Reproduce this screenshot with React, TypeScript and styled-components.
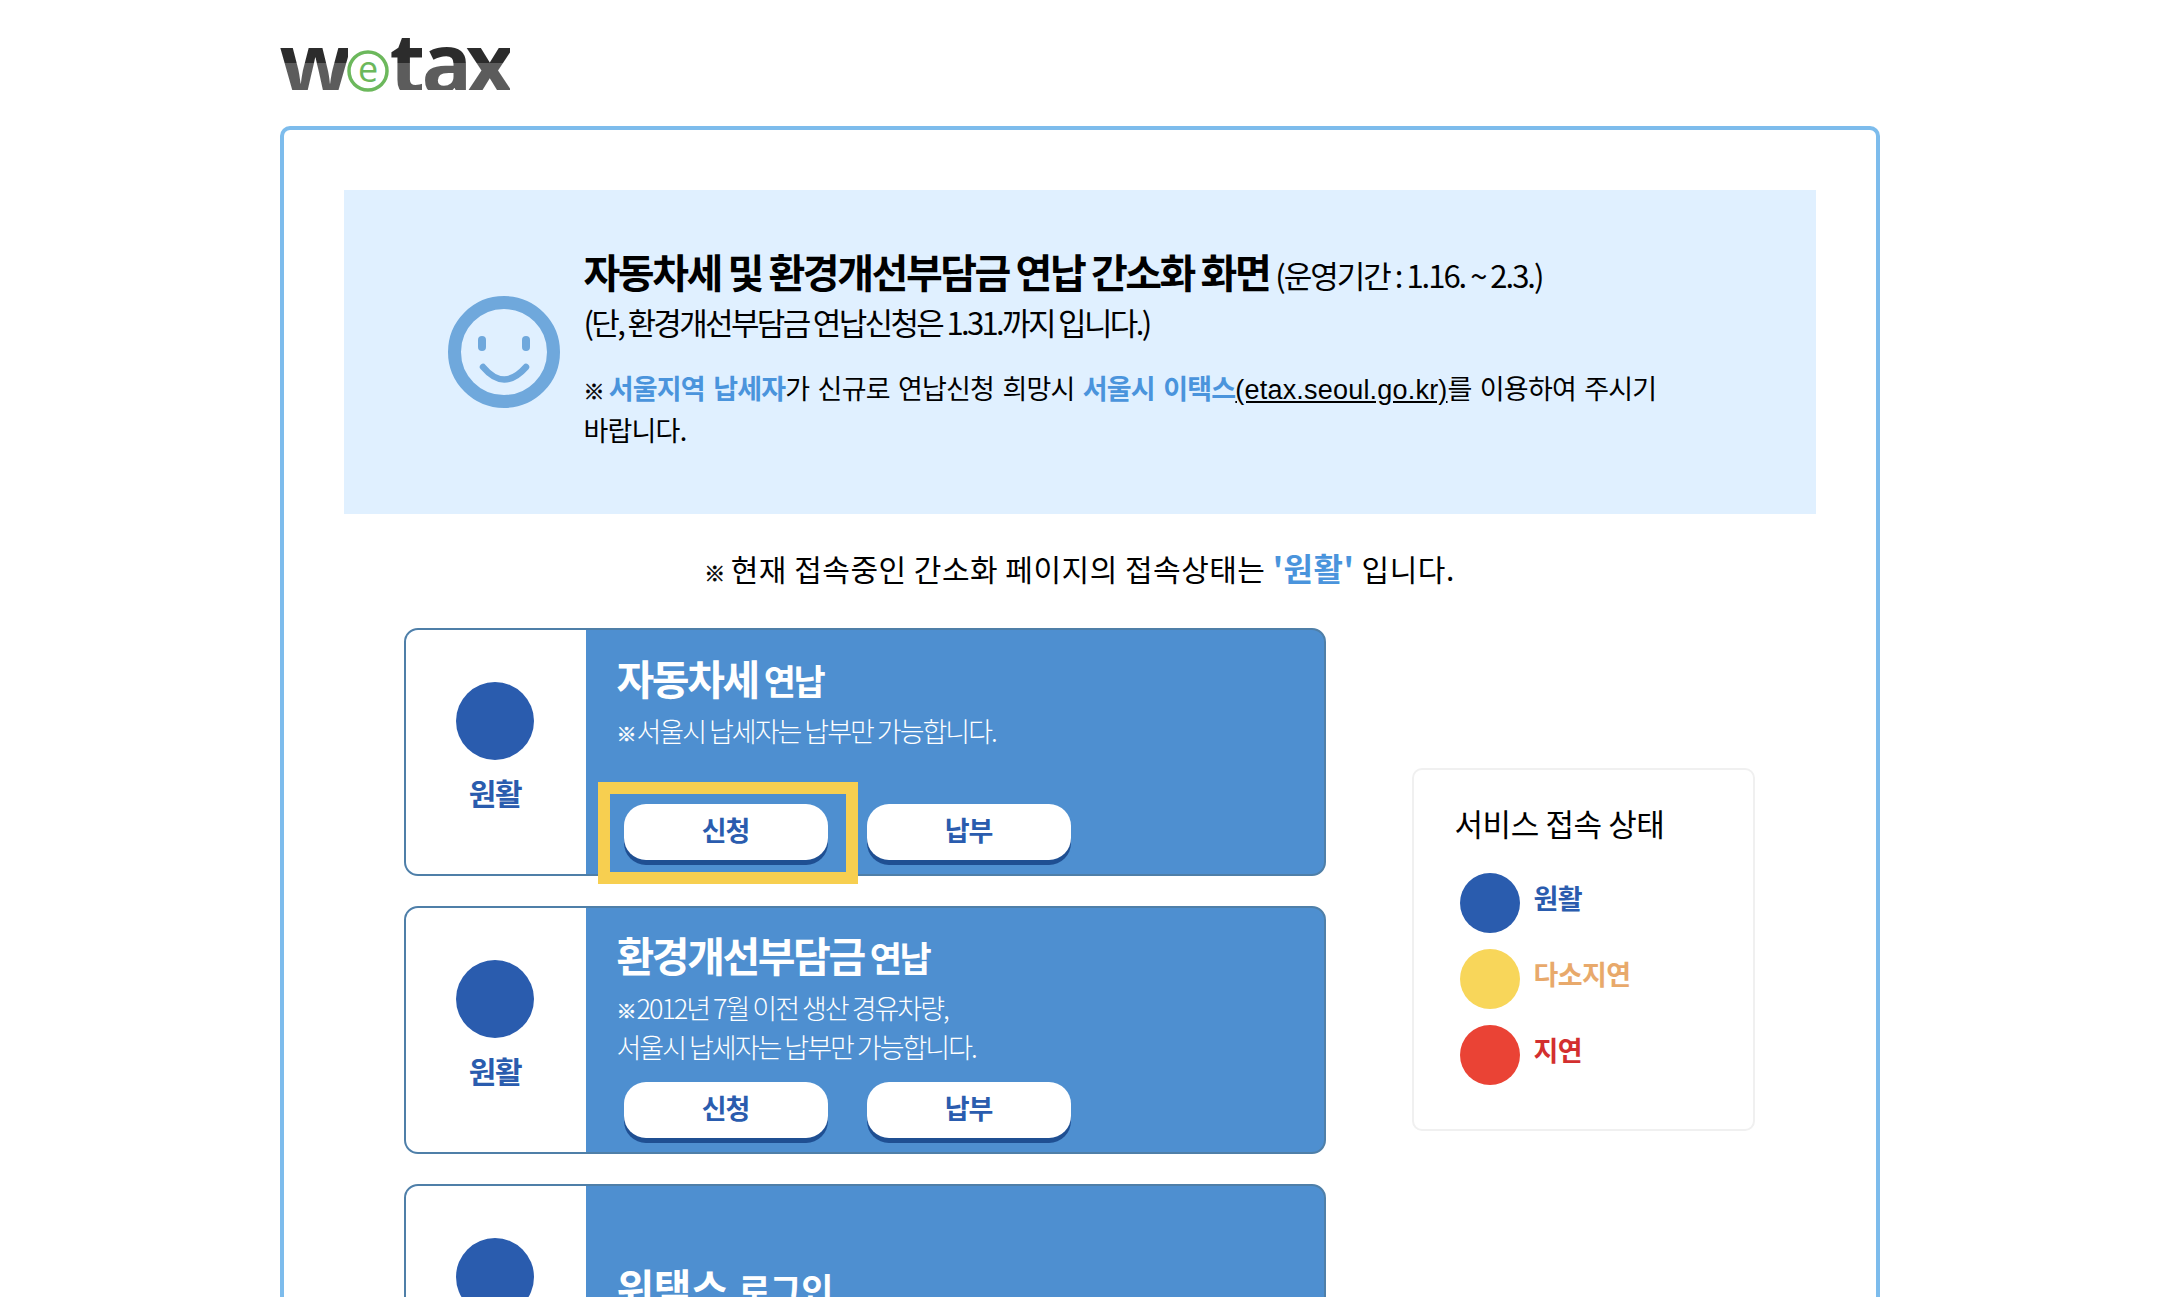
import React from "react";
import styled, { createGlobalStyle } from "styled-components";

const Global = createGlobalStyle`
  html, body { margin: 0; padding: 0; height: 100%; overflow: hidden; background: #fff; }
  body { font-family: "Noto Sans CJK KR", "Liberation Sans", sans-serif; color: #000; }
  * { box-sizing: border-box; }
`;

const Page = styled.div`
  width: 1600px;
  margin: 0 auto;
  height: 1297px;
  overflow: hidden;
`;
const Header = styled.header`
  height: 126px;
  padding-top: 36px;
`;
const Logo = styled.div`
  display: flex;
  align-items: flex-end;
  height: 57px;
  overflow: hidden;
`;
const LogoLetter = styled.span<{ $w: number }>`
  display: block;
  width: ${(p) => p.$w}px;
  font-family: "Open Sans", "Liberation Sans", sans-serif;
  font-weight: 700;
  font-size: 84px;
  line-height: 56px;
  height: 56px;
  text-align: center;
  background: linear-gradient(#2c2c2c 0 52%, #5c5c5c 52% 100%);
  -webkit-background-clip: text;
  background-clip: text;
  color: transparent;
  transform: translateY(-3px);
`;
const LogoMark = styled.svg`
  display: block;
  flex: none;
  margin: 0 0 0 -2px;
`;
const Frame = styled.main`
  border: 4px solid #7dbcec;
  border-bottom: 0;
  border-radius: 10px 10px 0 0;
  padding: 60px 60px 0;
`;
const Banner = styled.section`
  height: 324px;
  background: #e0f0ff;
  display: flex;
  align-items: flex-start;
  padding: 58px 0 0 104px;
  gap: 24px;
`;
const Smile = styled.svg`
  flex: none;
  margin-top: 48px;
`;
const BannerBody = styled.div`
  width: 1090px;
`;
const BannerTitle = styled.h1`
  margin: 0;
  font-size: 40px;
  line-height: 46px;
  font-weight: 700;
  letter-spacing: -2.45px;
  white-space: nowrap;
`;
const Period = styled.span`
  font-size: 31px;
  font-weight: 400;
  letter-spacing: -2px;
  margin-left: 6px;
`;
const BannerSub = styled.p`
  margin: 1px 0 0;
  font-size: 31px;
  line-height: 46px;
  letter-spacing: -2.65px;
  white-space: nowrap;
`;
const BannerNote = styled.p`
  margin: 23px 0 0;
  font-size: 27px;
  line-height: 40px;
  letter-spacing: -0.8px;
  word-spacing: 3px;
  word-break: keep-all;
`;
const RefMark = styled.span`
  font-size: 21px;
  font-weight: 700;
  margin-right: 5px;
  -webkit-text-stroke: 0.5px currentColor;
`;
const Accent = styled.b`
  color: #4a94dc;
  font-weight: 700;
`;
const Site = styled.span`
  font-family: "Liberation Sans", sans-serif;
  letter-spacing: 0.2px;
  text-decoration: underline;
`;
const Status = styled.p`
  margin: 33px 0 0;
  height: 46px;
  text-align: center;
  font-size: 30px;
  line-height: 40px;
  letter-spacing: 0.5px;
`;
const StatusValue = styled.b`
  color: #4a94dc;
  font-size: 32px;
  font-weight: 700;
`;
const Columns = styled.div`
  display: flex;
  align-items: flex-start;
  justify-content: space-between;
  padding: 35px 61px 0 60px;
`;
const CardList = styled.div`
  width: 922px;
  display: flex;
  flex-direction: column;
  gap: 30px;
  flex: none;
`;
const Card = styled.article`
  display: flex;
  height: 248px;
  flex: none;
  border-radius: 14px;
  border: 2px solid #4f7fa8;
  overflow: hidden;
  background: #4e8fd0;
`;
const StatePanel = styled.div`
  width: 180px;
  flex: none;
  background: #fff;
  display: flex;
  flex-direction: column;
  align-items: center;
  padding: 52px 1px 0 0;
`;
const StateDot = styled.span<{ $c: string; $s: number }>`
  display: block;
  flex: none;
  width: ${(p) => p.$s}px;
  height: ${(p) => p.$s}px;
  border-radius: 50%;
  background: ${(p) => p.$c};
`;
const StateLabel = styled.span`
  margin-top: 10px;
  font-size: 30px;
  line-height: 44px;
  font-weight: 700;
  letter-spacing: -1.4px;
  color: #2a5cae;
`;
const CardBody = styled.div<{ $top: number }>`
  flex: 1;
  padding: ${(p) => p.$top}px 0 0 31px;
  color: #fff;
`;
const CardTitle = styled.h2<{ $open?: boolean }>`
  margin: 0;
  font-size: 41px;
  line-height: 56px;
  font-weight: 700;
  letter-spacing: ${(p) => (p.$open ? "-0.5px" : "-2.4px")};
  white-space: nowrap;
`;
const CardTitleTail = styled.span`
  font-size: 35px;
  letter-spacing: -2.4px;
  margin-left: 6px;
`;
const CardTitleTailOpen = styled(CardTitleTail)`
  letter-spacing: -0.6px;
  margin-left: 10px;
`;
const CardNote = styled.p`
  margin: 5px 0 0;
  font-size: 27px;
  line-height: 36px;
  font-weight: 300;
  letter-spacing: -2px;
  white-space: nowrap;
`;
const CardMark = styled.span`
  font-size: 20px;
  font-weight: 700;
  letter-spacing: 0;
  -webkit-text-stroke: 0.5px currentColor;
`;
const Buttons = styled.div<{ $top: number }>`
  display: flex;
  gap: 39px;
  margin: ${(p) => p.$top}px 0 0 7px;
`;
const ActionButton = styled.button`
  width: 204px;
  height: 56px;
  padding: 0 0 6px;
  border: 0;
  border-radius: 22px;
  background: #fff;
  box-shadow: 0 5px 0 #1f4f92;
  font-family: inherit;
  font-size: 27px;
  font-weight: 700;
  letter-spacing: -1.2px;
  color: #2a5cae;
`;
const Highlight = styled.span`
  position: absolute;
  left: 194px;
  top: 154px;
  width: 260px;
  height: 102px;
  border: 12px solid #f7cf50;
  pointer-events: none;
`;
const CardFrame = styled.div`
  position: relative;
`;
const LegendBox = styled.aside`
  width: 343px;
  height: 363px;
  margin-top: 140px;
  flex: none;
  border: 2px solid #f0f0f0;
  border-radius: 10px;
  padding: 30px 0 0 41px;
`;
const LegendTitle = styled.h3`
  margin: 0 0 27px;
  font-size: 31px;
  line-height: 46px;
  font-weight: 400;
  letter-spacing: -0.4px;
  white-space: nowrap;
`;
const LegendRows = styled.ul`
  list-style: none;
  margin: 0;
  padding: 0 0 0 5px;
  display: flex;
  flex-direction: column;
  gap: 16px;
`;
const LegendRow = styled.li`
  display: flex;
  align-items: center;
  gap: 14px;
`;
const LegendLabel = styled.span<{ $c: string }>`
  color: ${(p) => p.$c};
  font-size: 27px;
  font-weight: 700;
  line-height: 40px;
  letter-spacing: -0.6px;
  margin-top: -10px;
`;

const BLUE = "#2a5cae";

function StateCell() {
  return (
    <StatePanel>
      <StateDot $c={BLUE} $s={78} />
      <StateLabel>원활</StateLabel>
    </StatePanel>
  );
}

export default function App() {
  return (
    <Page>
      <Global />
      <Header>
        <Logo aria-label="wetax">
          <LogoLetter $w={68}>w</LogoLetter>
          <LogoMark width="44" height="46" viewBox="0 0 44 46">
            <circle cx="22" cy="24" r="19" fill="none" stroke="#6cb85c" strokeWidth="3.5" />
            <text x="22" y="35" textAnchor="middle" fontFamily="Open Sans, sans-serif" fontSize="36" fontWeight="400" fill="#6cb85c">e</text>
          </LogoMark>
          <LogoLetter $w={32}>t</LogoLetter>
          <LogoLetter $w={44}>a</LogoLetter>
          <LogoLetter $w={44}>x</LogoLetter>
        </Logo>
      </Header>
      <Frame>
        <Banner>
          <Smile width="112" height="112" viewBox="0 0 112 112">
            <circle cx="56" cy="56" r="49.5" fill="none" stroke="#6fa8dc" strokeWidth="13" />
            <rect x="30" y="40" width="8" height="15" rx="4" fill="#6fa8dc" />
            <rect x="74" y="40" width="8" height="15" rx="4" fill="#6fa8dc" />
            <path d="M35 71 Q56 96 78 71" fill="none" stroke="#6fa8dc" strokeWidth="6.5" strokeLinecap="round" />
          </Smile>
          <BannerBody>
            <BannerTitle>
              자동차세 및 환경개선부담금 연납 간소화 화면<Period>(운영기간 : 1.16. ~ 2.3.)</Period>
            </BannerTitle>
            <BannerSub>(단, 환경개선부담금 연납신청은 1.31.까지 입니다.)</BannerSub>
            <BannerNote>
              <RefMark>※</RefMark><Accent>서울지역 납세자</Accent>가 신규로 연납신청 희망시 <Accent>서울시 이택스</Accent>
              <Site>(etax.seoul.go.kr)</Site>를 이용하여 주시기 바랍니다.
            </BannerNote>
          </BannerBody>
        </Banner>
        <Status>
          <RefMark>※</RefMark>현재 접속중인 간소화 페이지의 접속상태는 <StatusValue>'원활'</StatusValue> 입니다.
        </Status>
        <Columns>
          <CardList>
            <CardFrame>
              <Card>
                <StateCell />
                <CardBody $top={19}>
                  <CardTitle>자동차세<CardTitleTail>연납</CardTitleTail></CardTitle>
                  <CardNote><CardMark>※</CardMark>서울시 납세자는 납부만 가능합니다.</CardNote>
                  <Buttons $top={52}>
                    <ActionButton>신청</ActionButton>
                    <ActionButton>납부</ActionButton>
                  </Buttons>
                </CardBody>
              </Card>
              <Highlight />
            </CardFrame>
            <Card>
              <StateCell />
              <CardBody $top={18}>
                <CardTitle>환경개선부담금<CardTitleTail>연납</CardTitleTail></CardTitle>
                <CardNote><CardMark>※</CardMark>2012년 7월 이전 생산 경유차량,<br />서울시 납세자는 납부만 가능합니다.</CardNote>
                <Buttons $top={17}>
                  <ActionButton>신청</ActionButton>
                  <ActionButton>납부</ActionButton>
                </Buttons>
              </CardBody>
            </Card>
            <Card>
              <StateCell />
              <CardBody $top={72}>
                <CardTitle $open>위택스<CardTitleTailOpen>로그인</CardTitleTailOpen></CardTitle>
              </CardBody>
            </Card>
          </CardList>
          <LegendBox>
            <LegendTitle>서비스 접속 상태</LegendTitle>
            <LegendRows>
              <LegendRow><StateDot $c={BLUE} $s={60} /><LegendLabel $c={BLUE}>원활</LegendLabel></LegendRow>
              <LegendRow><StateDot $c="#f8d65a" $s={60} /><LegendLabel $c="#e8a96b">다소지연</LegendLabel></LegendRow>
              <LegendRow><StateDot $c="#ea4335" $s={60} /><LegendLabel $c="#d32f2f">지연</LegendLabel></LegendRow>
            </LegendRows>
          </LegendBox>
        </Columns>
      </Frame>
    </Page>
  );
}
